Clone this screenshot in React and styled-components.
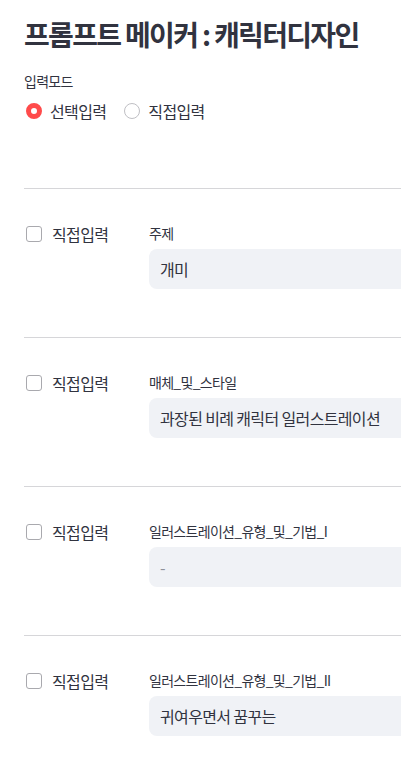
import React from "react";
import styled, { createGlobalStyle } from "styled-components";

const Global = createGlobalStyle`
  html, body {
    margin: 0;
    padding: 0;
    background: #ffffff;
    overflow-x: hidden;
  }
  body {
    font-family: "Noto Sans CJK KR", "Noto Sans", sans-serif;
    color: #31333f;
  }
  * { box-sizing: border-box; }
`;

const Page = styled.main`
  width: 900px;
  padding: 17px 0 40px 24px;
  display: flex;
  flex-direction: column;
`;

const Title = styled.h1`
  margin: 0;
  font-size: 28px;
  line-height: 34px;
  font-weight: 700;
  letter-spacing: -0.06em;
  color: #31333f;
`;

const FieldLabel = styled.div`
  font-size: 14px;
  line-height: 20px;
  letter-spacing: -0.05em;
  color: #31333f;
  margin-top: ${(p) => p.$mt || 0}px;
`;

const RadioGroup = styled.div`
  display: flex;
  gap: 16px;
  margin-top: 8px;
`;

const RadioOption = styled.label`
  display: flex;
  align-items: center;
  gap: 8px;
  font-size: 16px;
  line-height: 24px;
  letter-spacing: -0.04em;
`;

const RadioDot = styled.span`
  width: 16px;
  height: 16px;
  margin-left: 2px;
  border-radius: 50%;
  flex-shrink: 0;
  background: #ffffff;
  border: ${(p) => (p.$on ? "5px solid #ff4b4b" : "1px solid #bfbfc4")};
`;

const Divider = styled.hr`
  margin: ${(p) => p.$mt || 0}px 0 0 0;
  border: none;
  height: 1px;
  background: #d6d6d9;
`;

const Row = styled.section`
  display: grid;
  grid-template-columns: 125px 1fr;
  padding: 34px 0 48px 0;
`;

const CheckLine = styled.label`
  display: flex;
  align-items: center;
  gap: 10px;
  font-size: 16px;
  line-height: 24px;
  letter-spacing: -0.04em;
  margin-top: -1px;
`;

const CheckBox = styled.span`
  width: 16px;
  height: 16px;
  margin-left: 2px;
  border: 1px solid #a9a9ae;
  border-radius: 3px;
  background: #fff;
  flex-shrink: 0;
`;

const FieldCol = styled.div`
  display: flex;
  flex-direction: column;
  gap: 6px;
`;

const InputBox = styled.div`
  height: 40px;
  border-radius: 8px;
  background: #f0f2f6;
  padding: 0 11px;
  display: flex;
  align-items: center;
  font-size: 16px;
  letter-spacing: -0.04em;
  color: ${(p) => (p.$muted ? "#8f919a" : "#31333f")};
`;

const rows = [
  { label: "주제", value: "개미" },
  { label: "매체_및_스타일", value: "과장된 비례 캐릭터 일러스트레이션" },
  { label: "일러스트레이션_유형_및_기법_I", value: "-", muted: true },
  { label: "일러스트레이션_유형_및_기법_II", value: "귀여우면서 꿈꾸는" },
];

export default function App() {
  return (
    <>
      <Global />
      <Page>
        <Title>프롬프트 메이커 : 캐릭터디자인</Title>
        <FieldLabel $mt={20}>입력모드</FieldLabel>
        <RadioGroup>
          <RadioOption>
            <RadioDot $on />
            선택입력
          </RadioOption>
          <RadioOption>
            <RadioDot />
            직접입력
          </RadioOption>
        </RadioGroup>
        {rows.map((r, i) => (
          <React.Fragment key={r.label}>
            <Divider $mt={i === 0 ? 65 : 0} />
            <Row>
              <div>
                <CheckLine>
                  <CheckBox />
                  직접입력
                </CheckLine>
              </div>
              <FieldCol>
                <FieldLabel>{r.label}</FieldLabel>
                <InputBox $muted={r.muted}>{r.value}</InputBox>
              </FieldCol>
            </Row>
          </React.Fragment>
        ))}
      </Page>
    </>
  );
}
